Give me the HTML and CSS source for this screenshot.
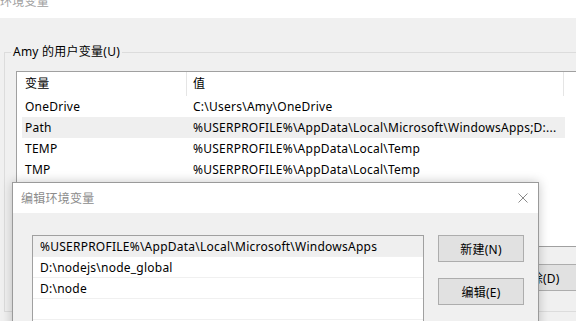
FILE: index.html
```html
<!DOCTYPE html>
<html lang="zh-CN">

<head>
    <meta charset="UTF-8">
    <title>环境变量</title>
    <link rel="stylesheet" href="styles.css">
</head>

<body>

    <!-- background window: 环境变量 -->
    <div class="bgwin">
        <div class="titlebar"><span class="title">环境变量</span></div>

        <div class="client">
            <fieldset class="group">
                <legend>Amy 的用户变量(U)</legend>

                <div class="listview">
                    <div class="lv-head">
                        <div class="hcol h1">变量</div>
                        <div class="hcol h2">值</div>
                    </div>
                    <div class="lv-row"><span class="c1">OneDrive</span><span class="c2">C:\Users\Amy\OneDrive</span></div>
                    <div class="lv-row selected"><span class="c1">Path</span><span class="c2">%USERPROFILE%\AppData\Local\Microsoft\WindowsApps;D:...</span></div>
                    <div class="lv-row"><span class="c1">TEMP</span><span class="c2">%USERPROFILE%\AppData\Local\Temp</span></div>
                    <div class="lv-row"><span class="c1">TMP</span><span class="c2">%USERPROFILE%\AppData\Local\Temp</span></div>
                </div>

                <div class="btnrow">
                    <button class="btn">新建(N)...</button>
                    <button class="btn">编辑(E)...</button>
                    <button class="btn">删除(D)</button>
                </div>
            </fieldset>
        </div>
    </div>

    <!-- edit dialog on top -->
    <div class="dialog">
        <div class="dlg-title">
            <span class="title">编辑环境变量</span>
            <svg class="close" width="10" height="10" viewBox="0 0 10 10">
                <path d="M0.5 0.5 L9.5 9.5 M9.5 0.5 L0.5 9.5" stroke="#8a8a8a" stroke-width="1" fill="none" />
            </svg>
        </div>

        <div class="dlg-body">
            <div class="pathlist">
                <div class="p-row selected">%USERPROFILE%\AppData\Local\Microsoft\WindowsApps</div>
                <div class="p-row">D:\nodejs\node_global</div>
                <div class="p-row">D:\node</div>
                <div class="p-row"></div>
            </div>

            <div class="dlg-buttons">
                <button class="btn">新建(N)</button>
                <button class="btn">编辑(E)</button>
                <button class="btn"></button>
            </div>
        </div>
    </div>

</body>

</html>
```

FILE: styles.css
```css
body {
    margin: 0;
    width: 576px;
    height: 321px;
    overflow: hidden;
    position: relative;
    background: #f0f0f0;
    font-family: "Noto Sans", "Noto Sans CJK SC", sans-serif;
    font-size: 12px;
    letter-spacing: 0.24px;
    color: #000;
}

/* background window */
.bgwin {
    width: 620px;
}

.titlebar {
    height: 18px;
    background: #fff;
    overflow: hidden;
}

.titlebar .title {
    display: block;
    margin-top: -5px;
    line-height: 14px;
    color: #a0a0a0;
}

.client {
    padding: 26px 0 0 4px;
}

.group {
    margin: 0;
    padding: 11px 0 20px 11px;
    border: 1px solid #dcdcdc;
    border-right: none;
    min-width: 0;
}

.group legend {
    margin-left: -5px;
    padding: 0 2px;
    line-height: 16px;
}

.listview {
    box-sizing: border-box;
    height: 176px;
    border: 1px solid #a0a0a0;
    border-right: none;
    background: #fff;
}

.lv-head {
    display: flex;
    height: 24px;
}

.hcol {
    line-height: 23px;
    border-right: 1px solid #e5e5e5;
    box-sizing: border-box;
}

.h1 {
    width: 170px;
    padding-left: 8px;
}

.h2 {
    width: 377px;
    padding-left: 6px;
}

.lv-row {
    display: flex;
    width: 543px;
    height: 21px;
    line-height: 22px;
    margin-left: 5px;
    padding-left: 3px;
    box-sizing: border-box;
    white-space: nowrap;
}

.lv-row.selected {
    background: #efefef;
}

.c1 {
    width: 168px;
    flex: none;
}

.btnrow {
    display: flex;
    justify-content: flex-end;
    gap: 12px;
    margin-top: 17px;
    padding-right: 38px;
}

.btn {
    box-sizing: border-box;
    width: 86px;
    height: 27px;
    padding: 0;
    background: #e1e1e1;
    border: 1px solid #adadad;
    font-family: inherit;
    font-size: 12px;
    letter-spacing: inherit;
    color: #000;
}

/* dialog window */
.dialog {
    position: absolute;
    left: 12px;
    top: 182px;
    width: 527px;
    height: 170px;
    box-sizing: border-box;
    border: 1px solid #9a9a9a;
    background: #f0f0f0;
    box-shadow: 0 0 10px rgba(0, 0, 0, 0.22);
}

.dlg-title {
    display: flex;
    align-items: center;
    justify-content: space-between;
    height: 30px;
    padding: 0 10px 0 8px;
    background: #fff;
}

.dlg-title .title {
    color: #8c8c8c;
}

.dlg-body {
    display: flex;
    gap: 14px;
    padding: 22px 0 0 19px;
}

.pathlist {
    width: 392px;
    height: 120px;
    box-sizing: border-box;
    border: 1px solid #a0a0a0;
    background: #fff;
}

.p-row {
    height: 21px;
    line-height: 21px;
    padding-left: 7px;
    box-sizing: border-box;
    border-bottom: 1px solid #f0f0f0;
    white-space: nowrap;
}

.p-row.selected {
    background: #efefef;
}

.dlg-buttons {
    display: flex;
    flex-direction: column;
    gap: 16px;
}
```
